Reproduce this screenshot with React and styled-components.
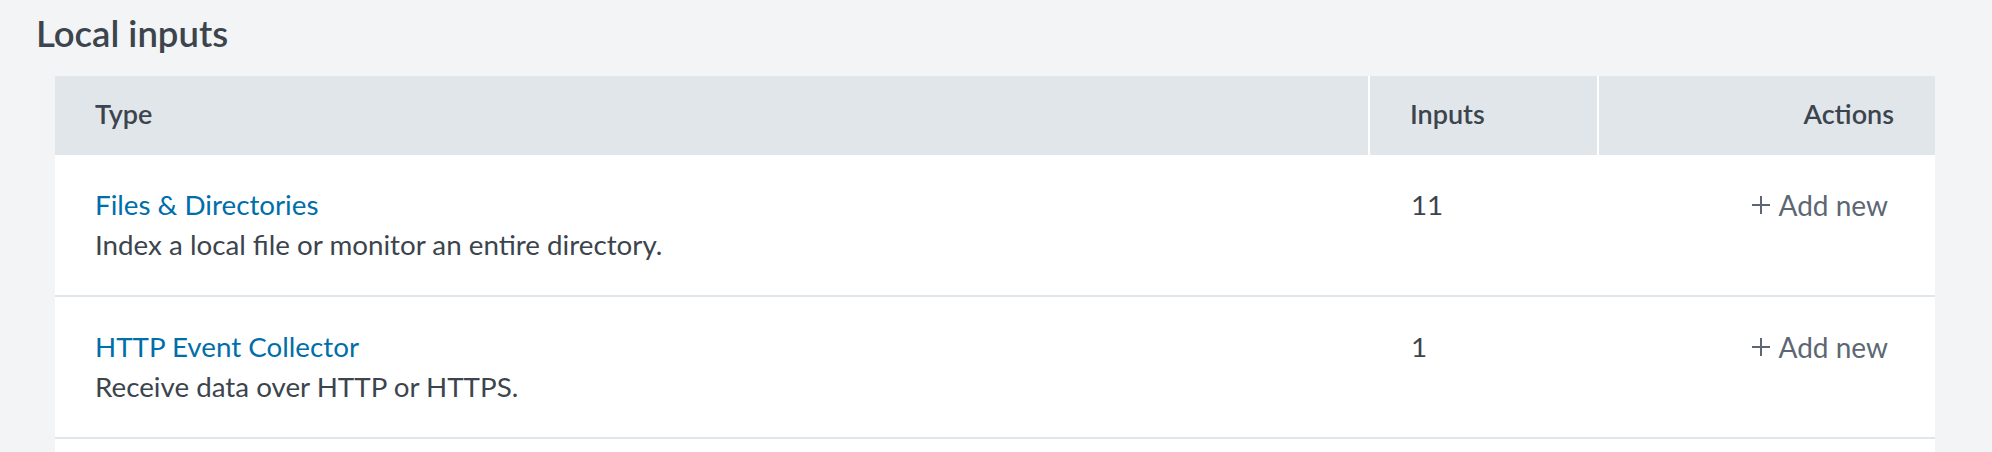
import React from "react";
import styled, { createGlobalStyle } from "styled-components";

const GlobalStyle = createGlobalStyle`
  html, body {
    margin: 0;
    padding: 0;
    background-color: #f2f4f5;
  }
  body {
    font-family: Lato, "Open Sans", sans-serif;
    color: #3c444d;
  }
`;

const Page = styled.div`
  padding: 11px 57px 0 36px;
`;

const Title = styled.h2`
  margin: 0 0 21px 0;
  font-size: 36.5px;
  line-height: 44px;
  font-weight: 600;
  color: #3c444d;
`;

const Table = styled.div`
  margin-left: 19px;
  background-color: #fff;
`;

const columns = "1fr 227px 336px";

const HeadRow = styled.div`
  display: grid;
  grid-template-columns: ${columns};
  column-gap: 2px;
  background-color: #fff;
`;

const HeadCell = styled.div`
  background-color: #e1e6eb;
  height: 79px;
  box-sizing: border-box;
  display: flex;
  align-items: center;
  justify-content: ${({ $align }) => ($align === "right" ? "flex-end" : "flex-start")};
  padding: 0 41px 4px 40px;
  font-size: 27px;
  font-weight: 600;
  color: #3c444d;
`;

const Row = styled.div`
  display: grid;
  grid-template-columns: ${columns};
  column-gap: 2px;
  border-bottom: 2px solid #e1e6eb;
  height: 142px;
  box-sizing: border-box;
`;

const Cell = styled.div`
  padding: 30px 41px 0 ${({ $first }) => ($first ? "40px" : "41px")};
  display: flex;
  flex-direction: column;
  align-items: ${({ $align }) => ($align === "right" ? "flex-end" : "flex-start")};
  font-size: 27.75px;
  line-height: 40px;
`;

const TypeLink = styled.a`
  color: #006eaa;
  text-decoration: none;
`;

const Description = styled.span`
  color: #3c444d;
`;

const Count = styled.span`
  color: #3c444d;
`;

const AddButton = styled.a`
  display: inline-flex;
  align-items: center;
  gap: 8px;
  margin-right: 6px;
  font-size: 28px;
  color: #5c6773;
  text-decoration: none;
  svg {
    flex: none;
  }
`;

const PlusIcon = () => (
  <svg width="20" height="20" viewBox="0 0 20 20" aria-hidden="true">
    <path d="M10 1v18M1 10h18" stroke="#5c6773" strokeWidth="2" fill="none" />
  </svg>
);

const inputs = [
  {
    name: "Files & Directories",
    description: "Index a local file or monitor an entire directory.",
    count: 11,
  },
  {
    name: "HTTP Event Collector",
    description: "Receive data over HTTP or HTTPS.",
    count: 1,
  },
  {
    name: "TCP / UDP",
    description: "Listen on a TCP or UDP port to capture data sent over the network.",
    count: 0,
  },
];

const App = () => {
  return (
    <Page>
      <GlobalStyle />
      <Title>Local inputs</Title>
      <Table>
        <HeadRow>
          <HeadCell>Type</HeadCell>
          <HeadCell>Inputs</HeadCell>
          <HeadCell $align="right">Actions</HeadCell>
        </HeadRow>
        {inputs.map((input) => (
          <Row key={input.name}>
            <Cell $first>
              <TypeLink href="#">{input.name}</TypeLink>
              <Description>{input.description}</Description>
            </Cell>
            <Cell>
              <Count>{input.count}</Count>
            </Cell>
            <Cell $align="right">
              <AddButton href="#">
                <PlusIcon />
                Add new
              </AddButton>
            </Cell>
          </Row>
        ))}
      </Table>
    </Page>
  );
};

export default App;
